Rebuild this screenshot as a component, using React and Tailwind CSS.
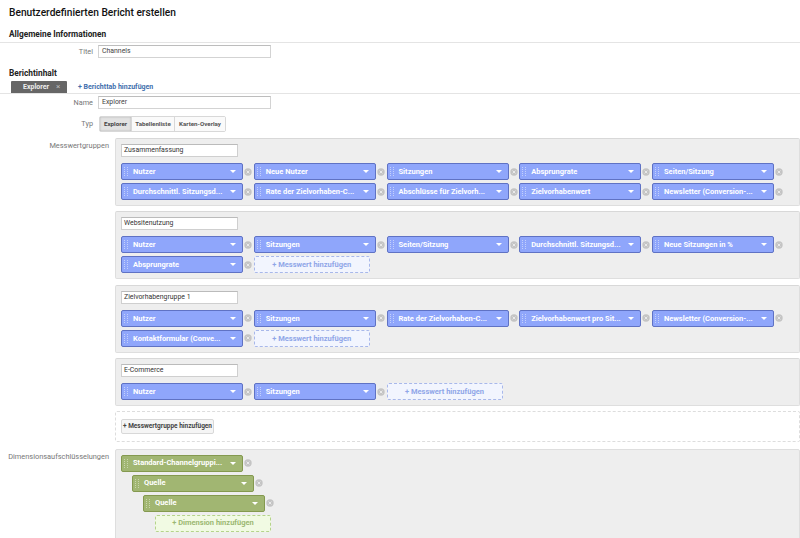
const Grip = ({ light }) => (
  <svg width="5" height="9" viewBox="0 0 5 9" className="shrink-0">
    {[0, 2, 4, 6, 8].flatMap((y) =>
      [0, 3].map((x) => <rect key={`${x}-${y}`} x={x} y={y} width="1" height="1" fill={light ? "#c4d0fb" : "#c9d6ac"} />)
    )}
  </svg>
);

const X = () => (
  <svg width="8" height="8" viewBox="0 0 8 8" className="shrink-0">
    <circle cx="4" cy="4" r="3.7" fill="#c4c4c4" />
    <path d="M2.6 2.6l2.8 2.8M5.4 2.6l-2.8 2.8" stroke="#eee" strokeWidth="0.9" />
  </svg>
);

const Pill = ({ label, green, indent = "" }) => (
  <div className={`flex items-center ${indent}`}>
    <div
      className={`flex h-[17px] w-[122px] items-center rounded-[2px] border pl-[2px] pr-[6px] text-[7.5px] font-bold leading-none text-white ${
        green ? "border-[#84994f] bg-[#a1b672]" : "border-[#5f72c4] bg-[#8fa6fb]"
      }`}
    >
      <Grip light={!green} />
      <span className="ml-[4px] flex-1 whitespace-nowrap">{label}</span>
      <span className="h-0 w-0 border-x-[3px] border-t-[3px] border-x-transparent border-t-white" />
    </div>
    <span className="ml-[1px] flex w-[8px] justify-center">
      <X />
    </span>
  </div>
);

const AddBtn = ({ label, green, indent = "" }) => (
  <div
    className={`flex h-[17px] w-[116px] ${indent} items-center justify-center rounded-[2px] border border-dashed text-[7.5px] font-bold ${
      green ? "border-[#b5d38b] bg-[#f1fae3] text-[#9cb872]" : "border-[#a8b8ea] bg-[#f2f5fe] text-[#8fa6e8]"
    }`}
  >
    + {label}
  </div>
);

const Group = ({ title, rows }) => (
  <div className="rounded-[2px] border border-[#dedede] border-t-[#d8d8d8] bg-[#eeeeee] pb-[5px] pl-[5px] pt-[5px]">
    <div className="flex h-[13px] w-[117px] items-center border border-[#cfcfcf] border-t-[#bbb] bg-white pl-[2px] text-[6.9px] leading-none text-[#333]">
      {title}
    </div>
    <div className="mt-[6px] flex flex-col gap-[3px]">
      {rows.map((row, i) => (
        <div key={i} className="grid grid-cols-[repeat(5,132.75px)]">
          {row.map((p, j) =>
            p.startsWith("+") ? <AddBtn key={j} label={p.slice(2)} /> : <Pill key={j} label={p} />
          )}
        </div>
      ))}
    </div>
  </div>
);

const Label = ({ children }) => (
  <div className="w-[109px] shrink-0 pt-[4px] text-right text-[7.4px] leading-none text-[#777]">{children}</div>
);

const ShortLabel = ({ children }) => (
  <div className="w-[93px] shrink-0 text-right text-[7.3px] leading-none text-[#777]">{children}</div>
);

const TextInput = ({ value }) => (
  <div className="flex h-[13px] w-[173px] items-center border border-[#d3d3d3] border-t-[#bdbdbd] bg-white pl-[3px] text-[6.9px] leading-none text-[#444]">
    {value}
  </div>
);

export default function App() {
  return (
    <div className="h-[538px] w-[800px] overflow-hidden bg-white font-['Roboto',sans-serif]">
      <h1 className="pl-[9px] pt-[6px] text-[10.2px] font-medium leading-[13px] text-[#111]">
        Benutzerdefinierten Bericht erstellen
      </h1>

      <h2 className="mt-[10px] pl-[9px] text-[8.3px] font-bold leading-[10px] text-[#222]">Allgemeine Informationen</h2>
      <div className="mt-[3px] border-t border-[#e4e4e4]" />
      <div className="mt-[2px] flex items-center">
        <ShortLabel>Titel</ShortLabel>
        <div className="ml-[5px]"><TextInput value="Channels" /></div>
      </div>

      <h2 className="mt-[10px] pl-[9px] text-[8.3px] font-bold leading-[10px] text-[#222]">Berichtinhalt</h2>

      <div className="mt-[4px] flex h-[12px] items-end border-b border-[#e4e4e4] pl-[11px]">
        <div className="flex h-[12px] w-[56px] items-center rounded-t-[1px] bg-[#666] pl-[12px] text-[7px] font-bold leading-none text-[#eee]">
          Explorer
          <span className="ml-[7px] text-[8px] font-normal text-[#bbb]">×</span>
        </div>
        <div className="ml-[11px] self-center text-[7px] font-bold leading-none text-[#3f6fad]">+ Berichttab hinzufügen</div>
      </div>

      <div className="mt-[2px] flex items-center">
        <ShortLabel>Name</ShortLabel>
        <div className="ml-[5px]"><TextInput value="Explorer" /></div>
      </div>

      <div className="mt-[7px] flex items-center">
        <ShortLabel>Typ</ShortLabel>
        <div className="ml-[6px] flex h-[16px] rounded-[2px] border border-[#d8d8d8] text-[6.2px] font-bold leading-none text-[#555]">
          <div className="flex w-[31px] items-center justify-center bg-[#e2e2e2] text-[#444] shadow-[inset_0_0_2px_#aaa]">Explorer</div>
          <div className="flex w-[44px] items-center justify-center border-x border-[#d8d8d8] bg-[#fafafa]">Tabellenliste</div>
          <div className="flex w-[50px] items-center justify-center bg-[#fafafa]">Karten-Overlay</div>
        </div>
      </div>

      <div className="mt-[6px] flex">
        <Label>Messwertgruppen</Label>
        <div className="ml-[6px] flex w-[685px] flex-col gap-[5.4px]">
          <Group
            title="Zusammenfassung"
            rows={[
              ["Nutzer", "Neue Nutzer", "Sitzungen", "Absprungrate", "Seiten/Sitzung"],
              ["Durchschnittl. Sitzungsd...", "Rate der Zielvorhaben-C...", "Abschlüsse für Zielvorh...", "Zielvorhabenwert", "Newsletter (Conversion-..."],
            ]}
          />
          <Group
            title="Websitenutzung"
            rows={[
              ["Nutzer", "Sitzungen", "Seiten/Sitzung", "Durchschnittl. Sitzungsd...", "Neue Sitzungen in %"],
              ["Absprungrate", "+ Messwert hinzufügen"],
            ]}
          />
          <Group
            title="Zielvorhabengruppe 1"
            rows={[
              ["Nutzer", "Sitzungen", "Rate der Zielvorhaben-C...", "Zielvorhabenwert pro Sit...", "Newsletter (Conversion-..."],
              ["Kontaktformular (Conve...", "+ Messwert hinzufügen"],
            ]}
          />
          <Group title="E-Commerce" rows={[["Nutzer", "Sitzungen", "+ Messwert hinzufügen"]]} />
          <div className="-mt-[1px] rounded-[2px] border border-dashed border-[#ddd] bg-white py-[7px] pl-[5px]">
            <div className="flex h-[15px] w-[93px] items-center justify-center whitespace-nowrap rounded-[2px] border border-[#d8d8d8] bg-[#f5f5f5] text-[6.5px] font-bold leading-none text-[#444]">
              + Messwertgruppe hinzufügen
            </div>
          </div>
        </div>
      </div>

      <div className="mt-[7px] flex">
        <Label>Dimensionsaufschlüsselungen</Label>
        <div className="ml-[6px] flex h-[100px] w-[685px] flex-col gap-[3px] rounded-[2px] border border-[#dedede] bg-[#eeeeee] pl-[5px] pt-[5px]">
          <Pill green label="Standard-Channelgruppi..." />
          <Pill green label="Quelle" indent="ml-[11px]" />
          <Pill green label="Quelle" indent="ml-[22px]" />
          <AddBtn green label="Dimension hinzufügen" indent="ml-[34px]" />
        </div>
      </div>
    </div>
  );
}
